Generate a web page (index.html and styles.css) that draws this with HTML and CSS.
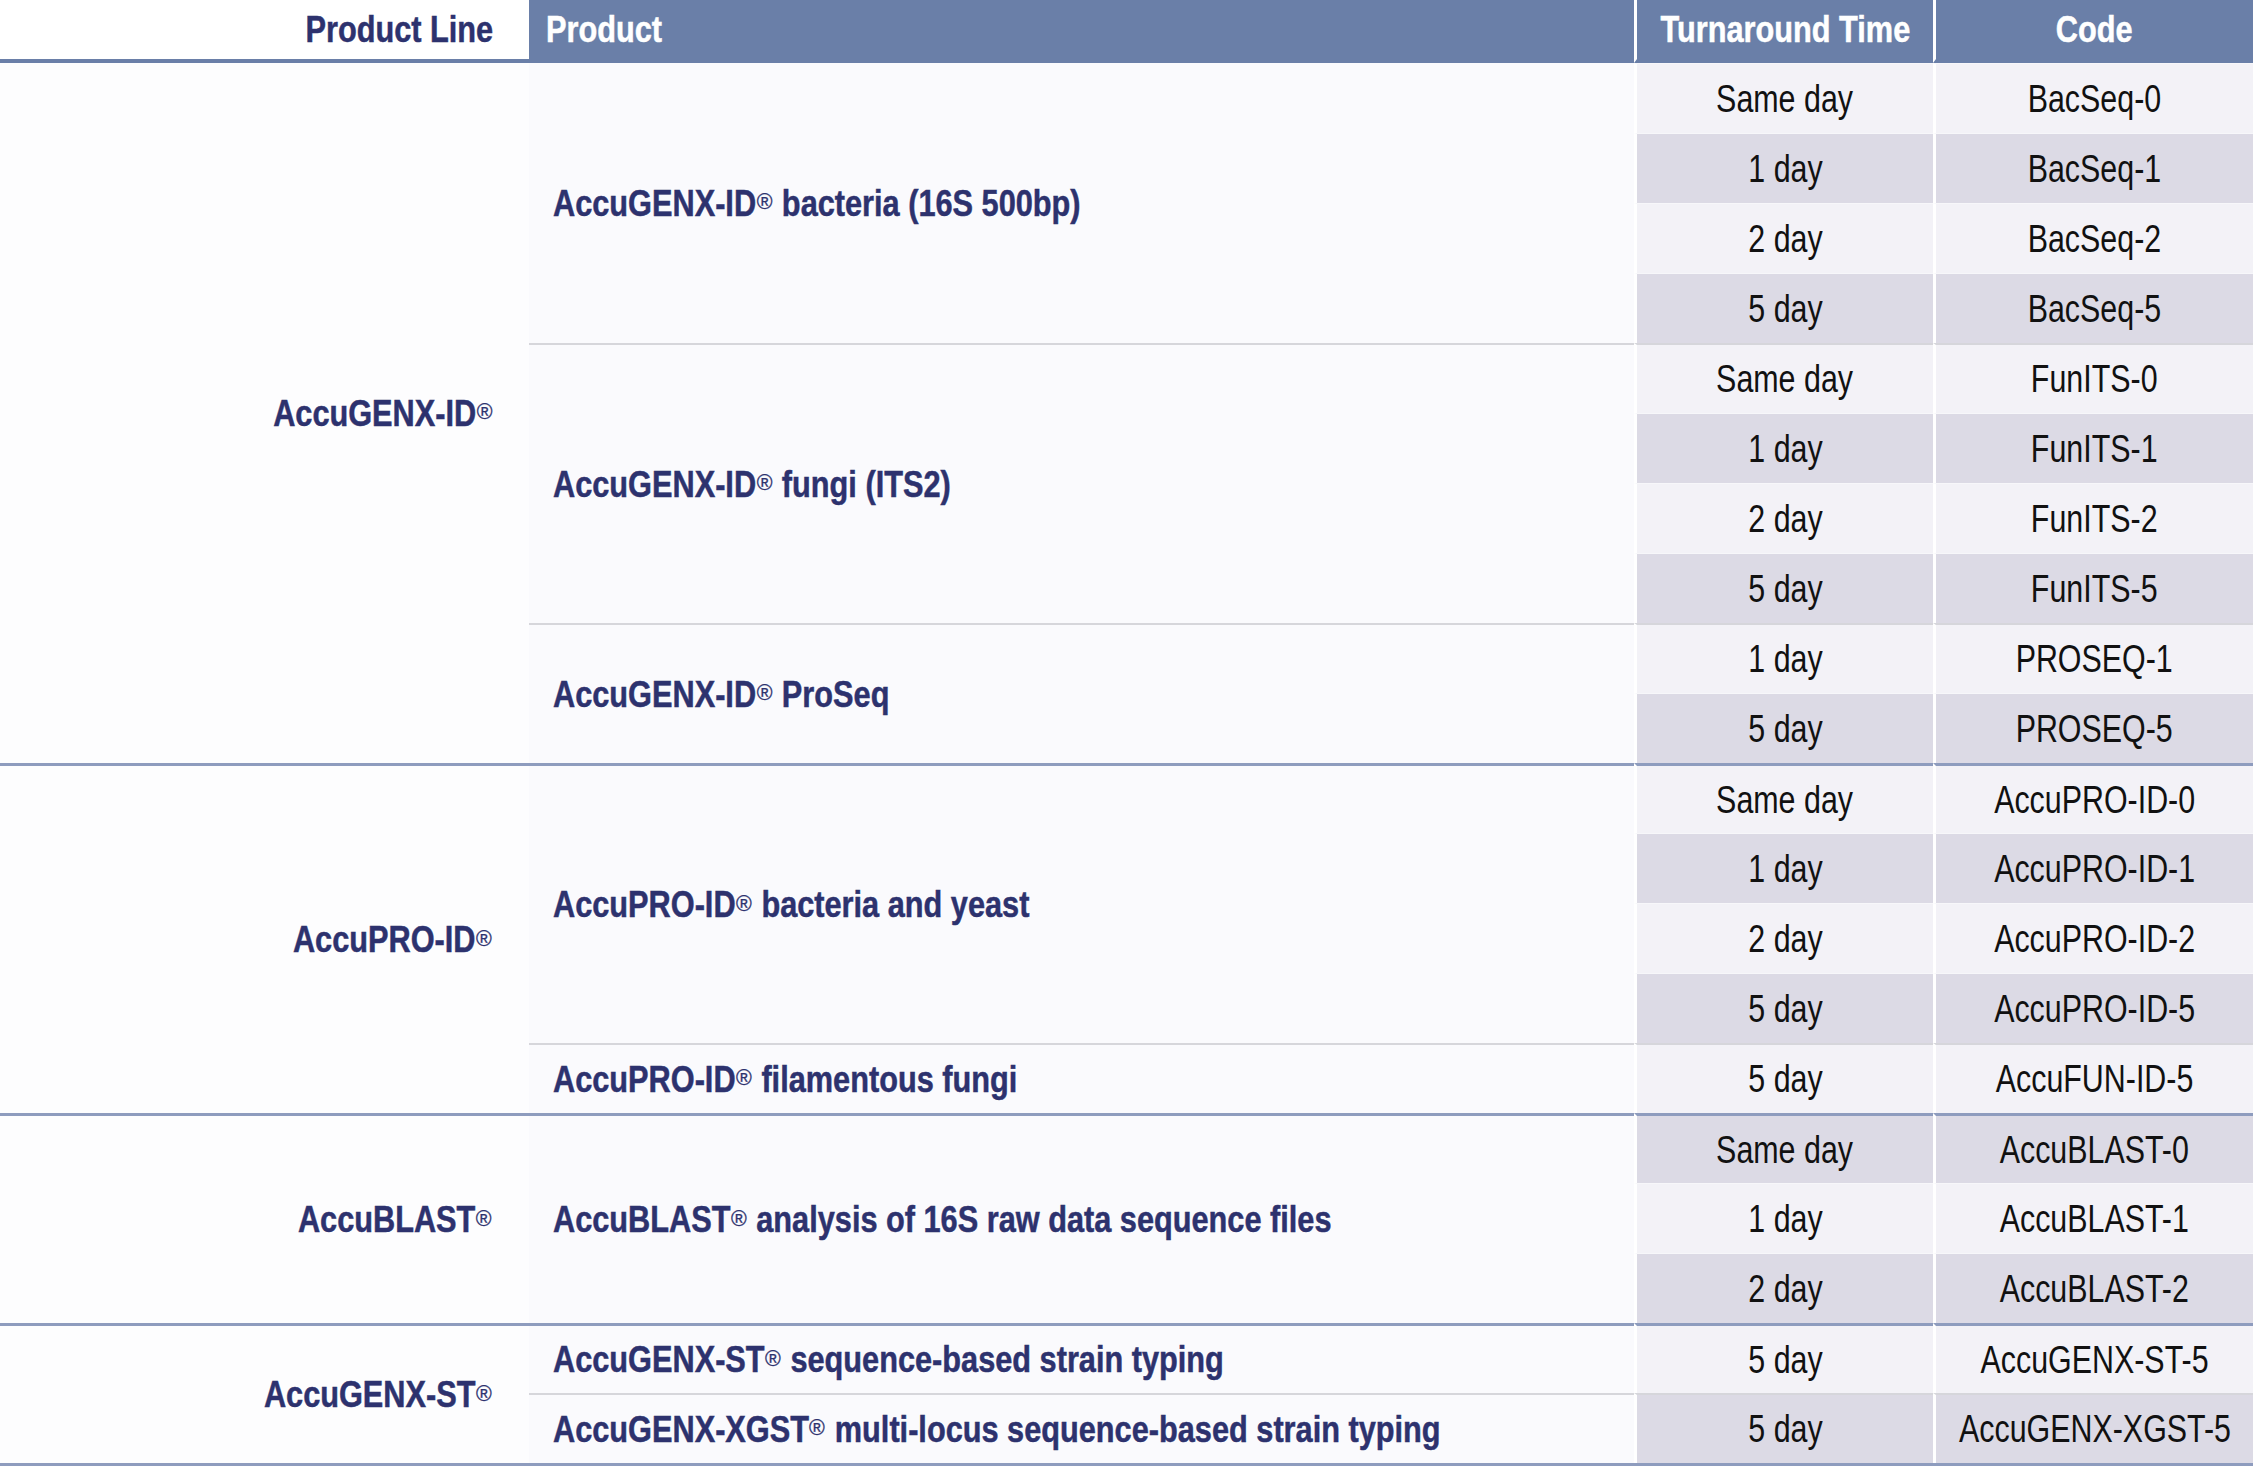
FILE: index.html
```html
<!DOCTYPE html>
<html>
<head>
<meta charset="utf-8">
<link rel="stylesheet" href="styles.css">
</head>
<body>
<table class="grid">
  <colgroup>
    <col class="c-line"><col class="c-prod"><col class="c-tat"><col class="c-code">
  </colgroup>
  <thead>
    <tr>
      <th class="h-line"><span class="t">Product Line</span></th>
      <th class="h-prod"><span class="t">Product</span></th>
      <th class="h-tat"><span class="t">Turnaround Time</span></th>
      <th class="h-code"><span class="t">Code</span></th>
    </tr>
  </thead>
  <tbody>
    <tr class="l">
      <td class="line" rowspan="10"><span class="t">AccuGENX-ID<sup>®</sup></span></td>
      <td class="prod" rowspan="4"><span class="t">AccuGENX-ID<sup>®</sup> bacteria (16S 500bp)</span></td>
      <td class="tat"><span class="t">Same day</span></td><td class="code"><span class="t">BacSeq-0</span></td>
    </tr>
    <tr class="d"><td class="tat"><span class="t">1 day</span></td><td class="code"><span class="t">BacSeq-1</span></td></tr>
    <tr class="l"><td class="tat"><span class="t">2 day</span></td><td class="code"><span class="t">BacSeq-2</span></td></tr>
    <tr class="d"><td class="tat"><span class="t">5 day</span></td><td class="code"><span class="t">BacSeq-5</span></td></tr>
    <tr class="l sep">
      <td class="prod" rowspan="4"><span class="t">AccuGENX-ID<sup>®</sup> fungi (ITS2)</span></td>
      <td class="tat"><span class="t">Same day</span></td><td class="code"><span class="t">FunITS-0</span></td>
    </tr>
    <tr class="d"><td class="tat"><span class="t">1 day</span></td><td class="code"><span class="t">FunITS-1</span></td></tr>
    <tr class="l"><td class="tat"><span class="t">2 day</span></td><td class="code"><span class="t">FunITS-2</span></td></tr>
    <tr class="d"><td class="tat"><span class="t">5 day</span></td><td class="code"><span class="t">FunITS-5</span></td></tr>
    <tr class="l sep">
      <td class="prod" rowspan="2"><span class="t">AccuGENX-ID<sup>®</sup> ProSeq</span></td>
      <td class="tat"><span class="t">1 day</span></td><td class="code"><span class="t">PROSEQ-1</span></td>
    </tr>
    <tr class="d"><td class="tat"><span class="t">5 day</span></td><td class="code"><span class="t">PROSEQ-5</span></td></tr>

    <tr class="l grp">
      <td class="line" rowspan="5"><span class="t">AccuPRO-ID<sup>®</sup></span></td>
      <td class="prod" rowspan="4"><span class="t">AccuPRO-ID<sup>®</sup> bacteria and yeast</span></td>
      <td class="tat"><span class="t">Same day</span></td><td class="code"><span class="t">AccuPRO-ID-0</span></td>
    </tr>
    <tr class="d"><td class="tat"><span class="t">1 day</span></td><td class="code"><span class="t">AccuPRO-ID-1</span></td></tr>
    <tr class="l"><td class="tat"><span class="t">2 day</span></td><td class="code"><span class="t">AccuPRO-ID-2</span></td></tr>
    <tr class="d"><td class="tat"><span class="t">5 day</span></td><td class="code"><span class="t">AccuPRO-ID-5</span></td></tr>
    <tr class="l sep">
      <td class="prod"><span class="t">AccuPRO-ID<sup>®</sup> filamentous fungi</span></td>
      <td class="tat"><span class="t">5 day</span></td><td class="code"><span class="t">AccuFUN-ID-5</span></td>
    </tr>

    <tr class="d grp">
      <td class="line" rowspan="3"><span class="t">AccuBLAST<sup>®</sup></span></td>
      <td class="prod" rowspan="3"><span class="t">AccuBLAST<sup>®</sup> analysis of 16S raw data sequence files</span></td>
      <td class="tat"><span class="t">Same day</span></td><td class="code"><span class="t">AccuBLAST-0</span></td>
    </tr>
    <tr class="l"><td class="tat"><span class="t">1 day</span></td><td class="code"><span class="t">AccuBLAST-1</span></td></tr>
    <tr class="d"><td class="tat"><span class="t">2 day</span></td><td class="code"><span class="t">AccuBLAST-2</span></td></tr>

    <tr class="l grp">
      <td class="line" rowspan="2"><span class="t">AccuGENX-ST<sup>®</sup></span></td>
      <td class="prod"><span class="t">AccuGENX-ST<sup>®</sup> sequence-based strain typing</span></td>
      <td class="tat"><span class="t">5 day</span></td><td class="code"><span class="t">AccuGENX-ST-5</span></td>
    </tr>
    <tr class="d sep">
      <td class="prod"><span class="t">AccuGENX-XGST<sup>®</sup> multi-locus sequence-based strain typing</span></td>
      <td class="tat"><span class="t">5 day</span></td><td class="code"><span class="t">AccuGENX-XGST-5</span></td>
    </tr>
  </tbody>
</table>
</body>
</html>
```

FILE: styles.css
```css
html, body {
  margin: 0;
  padding: 0;
  background: #ffffff;
}

.grid {
  width: 2253px;
  table-layout: fixed;
  border-collapse: separate;
  border-spacing: 0;
  font-family: "Liberation Sans", Arial, sans-serif;
  font-size: 37px;
  border-bottom: 3px solid #8e9cbe;
}

.c-line { width: 529px; }
.c-prod { width: 1105px; }
.c-tat  { width: 299px; }
.c-code { width: 320px; }

/* condensed text: the reference face is a narrow grotesque */
.t {
  display: inline-block;
  white-space: nowrap;
  transform: scaleX(0.83);
}

th {
  height: 63px;
  box-sizing: border-box;
  padding: 0;
  font-weight: bold;
  border-bottom: 4px solid #6a7fa8;
  vertical-align: middle;
  line-height: 1;
  -webkit-text-stroke: 0.5px currentColor;
}

.h-line {
  text-align: right;
  padding-right: 36px;
  color: #2d326e;
  background: #ffffff;
}
.h-line .t { transform-origin: right center; }

.h-prod {
  text-align: left;
  padding-left: 17px;
  color: #ffffff;
  background: #6a7fa8;
}
.h-prod .t { transform-origin: left center; }

.h-tat, .h-code {
  text-align: center;
  color: #ffffff;
  background: #6a7fa8;
  border-left: 3px solid #ffffff;
}
.h-tat .t, .h-code .t {
  transform-origin: center center;
  margin: 0 -40px;
}

tbody tr {
  height: 70px;
}

td {
  padding: 0;
  vertical-align: middle;
  line-height: 1;
}

.line {
  text-align: right;
  padding-right: 36px;
  font-weight: bold;
  color: #2d326e;
  background: #fdfdfe;
  -webkit-text-stroke: 0.5px currentColor;
}
.line .t { transform-origin: right center; }

.prod {
  text-align: left;
  padding-left: 24px;
  font-weight: bold;
  color: #2d326e;
  background: #fafafd;
  -webkit-text-stroke: 0.5px currentColor;
}
.prod .t { transform-origin: left center; }

.tat, .code {
  text-align: center;
  font-size: 38px;
  color: #111111;
  border-left: 3px solid #ffffff;
  border-top: 1px solid #f7f7fa;
}
.tat .t, .code .t {
  transform: scaleX(0.8);
  transform-origin: center center;
  margin: 0 -50px;
}

tr.l .tat, tr.l .code { background: #f3f2f7; }
tr.d .tat, tr.d .code { background: #dcdae5; }

tr.sep .prod, tr.sep .tat, tr.sep .code {
  border-top: 2px solid #d6d6db;
}

tr.grp td {
  border-top: 3px solid #8e9cbe;
}

/* registered mark: keep the circle round inside the condensed text */
sup {
  display: inline-block;
  font-size: 0.58em;
  font-weight: normal;
  line-height: 1;
  vertical-align: 0.3em;
  transform: scaleX(1.2);
  margin: 0 3px 0 2px;
  -webkit-text-stroke: 0.3px currentColor;
}
```
